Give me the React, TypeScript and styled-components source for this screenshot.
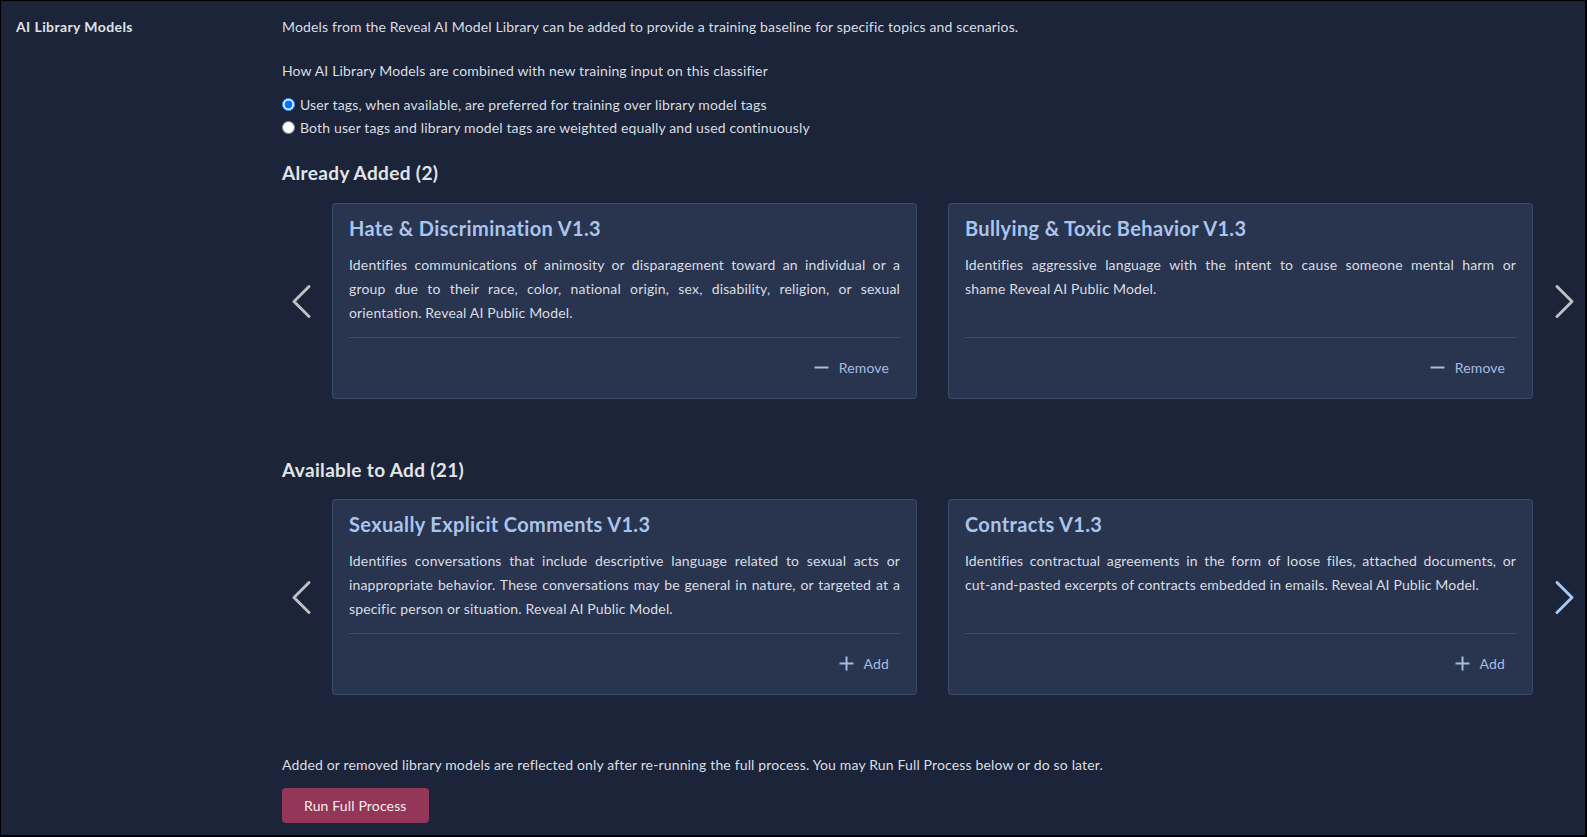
import React from 'react';
import styled, { createGlobalStyle } from 'styled-components';

interface Model {
	title: string;
	description: string;
}

const addedModels: Model[] = [
	{
		title: 'Hate & Discrimination V1.3',
		description:
			'Identifies communications of animosity or disparagement toward an individual or a group due to their race, color, national origin, sex, disability, religion, or sexual orientation. Reveal AI Public Model.',
	},
	{
		title: 'Bullying & Toxic Behavior V1.3',
		description:
			'Identifies aggressive language with the intent to cause someone mental harm or shame\u00a0Reveal AI Public Model.',
	},
];

const availableModels: Model[] = [
	{
		title: 'Sexually Explicit Comments V1.3',
		description:
			'Identifies conversations that include descriptive language related to sexual acts or inappropriate behavior. These conversations may be general in nature, or targeted at a specific person or situation. Reveal AI Public Model.',
	},
	{
		title: 'Contracts V1.3',
		description:
			'Identifies contractual agreements in the form of loose files, attached documents, or cut\u2011and\u2011pasted excerpts of contracts embedded in emails. Reveal AI Public Model.',
	},
];

const Chevron = ({ dir }: { dir: 'left' | 'right' }) => (
	<svg width="21" height="35" viewBox="0 0 21 35" fill="none">
		<polyline
			points={dir === 'left' ? '18,2.5 3,17.5 18,32.5' : '3,2.5 18,17.5 3,32.5'}
			stroke="currentColor"
			strokeWidth="3"
			strokeLinecap="round"
			strokeLinejoin="round"
		/>
	</svg>
);

const MinusIcon = () => (
	<svg width="15" height="15" viewBox="0 0 15 15">
		<line x1="0.5" y1="7.5" x2="14.5" y2="7.5" stroke="currentColor" strokeWidth="2" />
	</svg>
);

const PlusIcon = () => (
	<svg width="15" height="15" viewBox="0 0 15 15">
		<line x1="0.5" y1="7.5" x2="14.5" y2="7.5" stroke="currentColor" strokeWidth="2" />
		<line x1="7.5" y1="0.5" x2="7.5" y2="14.5" stroke="currentColor" strokeWidth="2" />
	</svg>
);

const ModelCard = ({ model, action }: { model: Model; action: 'add' | 'remove' }) => (
	<Card>
		<CardTitle>{model.title}</CardTitle>
		<CardText>{model.description}</CardText>
		<CardFooter>
			<ActionButton>
				{action === 'add' ? <PlusIcon /> : <MinusIcon />}
				<span>{action === 'add' ? 'Add' : 'Remove'}</span>
			</ActionButton>
		</CardFooter>
	</Card>
);

const Carousel = ({
	models,
	action,
	nextActive,
	tight,
}: {
	models: Model[];
	action: 'add' | 'remove';
	nextActive?: boolean;
	tight?: boolean;
}) => (
	<CarouselRow $tight={tight}>
		<ArrowButton side="left">
			<Chevron dir="left" />
		</ArrowButton>
		<CardTrack>
			{models.map((m) => (
				<ModelCard key={m.title} model={m} action={action} />
			))}
		</CardTrack>
		<ArrowButton side="right" $active={nextActive}>
			<Chevron dir="right" />
		</ArrowButton>
	</CarouselRow>
);

const App = () => {
	return (
		<>
			<GlobalStyle />
			<Frame>
				<Panel>
					<Label>AI Library Models</Label>
					<Content>
						<Paragraph>
							Models from the Reveal AI Model Library can be added to provide a training
							baseline for specific topics and scenarios.
						</Paragraph>
						<Paragraph style={{ marginTop: '24px' }}>
							How AI Library Models are combined with new training input on this classifier
						</Paragraph>
						<RadioGroup>
							<RadioRow>
								<input type="radio" name="combine" defaultChecked />
								User tags, when available, are preferred for training over library model tags
							</RadioRow>
							<RadioRow>
								<input type="radio" name="combine" />
								Both user tags and library model tags are weighted equally and used continuously
							</RadioRow>
						</RadioGroup>

						<SectionTitle>Already Added (2)</SectionTitle>
						<Carousel models={addedModels} action="remove" />

						<SectionTitle $spaced>Available to Add (21)</SectionTitle>
						<Carousel models={availableModels} action="add" nextActive tight />

						<Note>
							Added or removed library models are reflected only after re-running the full
							process. You may Run Full Process below or do so later.
						</Note>
						<PrimaryButton>Run Full Process</PrimaryButton>
					</Content>
				</Panel>
			</Frame>
		</>
	);
};

const GlobalStyle = createGlobalStyle`
	html, body {
		margin: 0;
		padding: 0;
		background: #000;
	}
	body {
		font-family: Lato, "Open Sans", sans-serif;
		font-size: 14px;
		letter-spacing: 0.15px;
		color: #dadde2;
	}
	* {
		box-sizing: border-box;
	}
`;

const Frame = styled.div`
	height: 100vh;
	padding: 1px 2px 2px 1px;
	display: flex;
`;

const Panel = styled.div`
	flex: 1;
	background: #1b2438;
	display: grid;
	grid-template-columns: 281px 1fr;
	overflow: hidden;
`;

const Label = styled.div`
	padding: 16px 0 0 15px;
	font-weight: 700;
	font-size: 14px;
	line-height: 20px;
	letter-spacing: 0.4px;
	color: #dfe2e6;
`;

const Content = styled.div`
	display: flex;
	flex-direction: column;
	align-items: flex-start;
	padding-top: 16px;
`;

const Paragraph = styled.p`
	margin: 0;
	line-height: 20px;
`;

const RadioGroup = styled.div`
	margin-top: 12px;
	display: flex;
	flex-direction: column;
`;

const RadioRow = styled.label`
	display: flex;
	align-items: center;
	line-height: 23px;

	input {
		width: 13px;
		height: 13px;
		margin: 0 5px 0 0;
	}
`;

const SectionTitle = styled.h2<{ $spaced?: boolean }>`
	margin: ${(p) => (p.$spaced ? '59px' : '22px')} 0 0;
	font-size: 19px;
	font-weight: 700;
	line-height: 24px;
	letter-spacing: 0.35px;
	color: #e2e4e8;
`;

const CarouselRow = styled.div<{ $tight?: boolean }>`
	align-self: stretch;
	margin-top: ${(p) => (p.$tight ? '17px' : '18px')};
	display: grid;
	grid-template-columns: 50px 1fr 52px;
	align-items: center;
`;

const ArrowButton = styled.button<{ side: 'left' | 'right'; $active?: boolean }>`
	display: flex;
	justify-content: ${(p) => (p.side === 'left' ? 'flex-end' : 'flex-start')};
	padding: ${(p) => (p.side === 'left' ? '0 20px 0 0' : '0 0 0 21px')};
	background: none;
	border: none;
	cursor: pointer;
	color: ${(p) => (p.$active ? '#a9c8f1' : '#bdbfc3')};
`;

const CardTrack = styled.div`
	display: grid;
	grid-template-columns: 1fr 1fr;
	gap: 31px;
`;

const Card = styled.div`
	display: flex;
	flex-direction: column;
	height: 196px;
	padding: 12px 16px 0;
	background: #29344f;
	border: 1px solid #3b4c6f;
	border-radius: 4px;
`;

const CardTitle = styled.h3`
	margin: 0;
	font-size: 20px;
	font-weight: 700;
	line-height: 24px;
	letter-spacing: 0.35px;
	color: #a9c5ee;
`;

const CardText = styled.p`
	flex: 1;
	margin: 13px 0 0;
	line-height: 24px;
	text-align: justify;
	color: #dadde2;
`;

const CardFooter = styled.div`
	display: flex;
	justify-content: flex-end;
	align-items: center;
	height: 61px;
	padding-bottom: 1px;
	border-top: 1px solid #3c4e70;
`;

const ActionButton = styled.button`
	display: flex;
	align-items: center;
	gap: 10px;
	height: 36px;
	padding: 0 11px;
	background: none;
	border: none;
	font-family: inherit;
	font-size: 14px;
	letter-spacing: 0.15px;
	color: #a3bde3;
	cursor: pointer;
`;

const Note = styled.p`
	margin: 60px 0 0;
	line-height: 20px;
`;

const PrimaryButton = styled.button`
	margin-top: 13px;
	height: 35px;
	padding: 0 22px;
	background: #943657;
	border: none;
	border-radius: 4px;
	font-family: inherit;
	font-size: 14px;
	letter-spacing: 0.15px;
	color: #f2eef0;
	cursor: pointer;
`;

export default App;
